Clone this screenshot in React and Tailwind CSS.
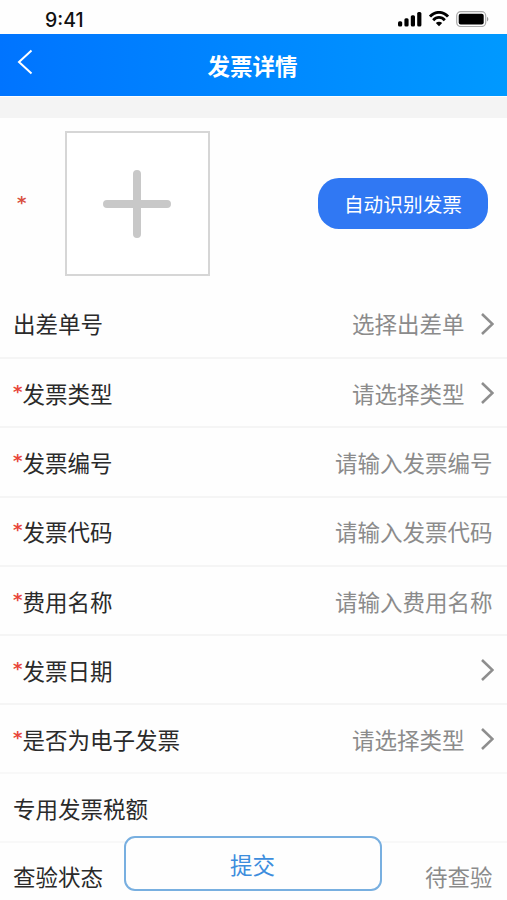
const rows = [
  { label: '出差单号', value: '选择出差单', arrow: true },
  { label: '发票类型', required: true, value: '请选择类型', arrow: true },
  { label: '发票编号', required: true, value: '请输入发票编号' },
  { label: '发票代码', required: true, value: '请输入发票代码' },
  { label: '费用名称', required: true, value: '请输入费用名称' },
  { label: '发票日期', required: true, arrow: true },
  { label: '是否为电子发票', required: true, value: '请选择类型', arrow: true, compact: true },
  { label: '专用发票税额', compact: true },
  { label: '查验状态', value: '待查验', compact: true },
];

function StatusBar() {
  return (
    <div className="flex h-[34px] shrink-0 items-start justify-between pl-[45px] pr-[18.500px]">
      <span className="pt-[9px] font-['Inter','Liberation_Sans',sans-serif] text-[19.500px] leading-[23px] font-medium text-[#111]">
        9:41
      </span>
      <div className="flex items-start pt-[11px]">
        <svg width="24" height="16" viewBox="0 0 24 16" fill="#000">
          <rect x="0" y="10.2" width="4.2" height="5.3" rx="1.5" />
          <rect x="6.4" y="7.3" width="4.2" height="8.2" rx="1.5" />
          <rect x="12.8" y="4.2" width="4.2" height="11.3" rx="1.5" />
          <rect x="19.2" y="1" width="4.2" height="14.5" rx="1.5" />
        </svg>
        <svg className="ml-[7px]" width="20" height="16" viewBox="0 0 20 16" fill="none" stroke="#000" strokeWidth="2.8">
          <path d="M1 5.6C6-.1 14-.1 19 5.6" />
          <path d="M4.2 9.2c3.4-3.8 8.2-3.8 11.6 0" />
          <path d="M10 15.2l-3.2-3.1c1.9-1.7 4.500-1.700 6.400 0z" fill="#000" stroke="none" />
        </svg>
        <svg className="ml-[7px]" width="33" height="16" viewBox="0 0 33 16">
          <rect x=".7" y=".7" width="29" height="14.800" rx="4" fill="none" stroke="#aaa" strokeWidth="1.2" />
          <rect x="2.700" y="2.800" width="25" height="10.600" rx="2" fill="#000" />
          <path d="M31 5.700c1.800.8 1.800 4 0 4.800z" fill="#999" />
        </svg>
      </div>
    </div>
  );
}

function Row({ label, required, value, arrow, compact }) {
  return (
    <div
      className={`flex shrink-0 items-center border-b-2 pl-[13px] pr-[14.500px] text-[22.5px] leading-[30px] ${
        compact ? 'h-[68.700px] border-[#f8f8f8]' : 'h-[69.300px] border-[#f5f5f5]'
      }`}
    >
      {required && (
        <span className="w-[9.500px] pb-[2px] font-['DejaVu_Sans',sans-serif] text-[18px] font-bold text-[#e8463a]">*</span>
      )}
      <span className="text-[#2a2a2a]">{label}</span>
      <span className="ml-auto text-[#8b8b8b]">{value}</span>
      {arrow && (
        <svg className="mt-px mr-[-1px] ml-[16px]" width="13" height="22" viewBox="0 0 13 22" fill="none" stroke="#8e8e8e" strokeWidth="2.600">
          <path d="M1 1l10.500 10L1 21" />
        </svg>
      )}
    </div>
  );
}

export default function App() {
  return (
    <div className="relative flex h-[900px] w-[507px] flex-col overflow-hidden bg-[#fefefe] font-['Noto_Sans_CJK_SC',sans-serif]">
      <StatusBar />
      <header className="grid h-[62px] shrink-0 grid-cols-3 items-center bg-linear-to-r from-[#0074ff] to-[#0099ff]">
        <svg className="mb-[6px] ml-[17px]" width="17" height="26" viewBox="0 0 17 26" fill="none" stroke="#fff" strokeWidth="2">
          <path d="M14.500 1.500L2 13l12.500 11.500" />
        </svg>
        <h1 className="pr-[2px] text-center text-[22.5px] leading-[30px] font-bold text-white">发票详情</h1>
      </header>
      <div className="h-[22px] shrink-0 border-t border-white bg-[#f4f4f4]" />
      <section className="flex h-[171px] shrink-0 items-center pl-[17px] pr-[19px]">
        <span className="w-[48px] pb-px font-['DejaVu_Sans',sans-serif] text-[18px] leading-[30px] font-bold text-[#d9503f]">*</span>
        <div className="flex size-[145px] items-center justify-center border-2 border-[#d6d6d6] bg-white">
          <svg className="mr-px" width="68" height="68" viewBox="0 0 68 68" stroke="#c8c8c8" strokeWidth="8" strokeLinecap="round">
            <path d="M4 34h60M34 4v60" />
          </svg>
        </div>
        <button className="ml-auto h-[51px] w-[170px] rounded-[21px] bg-[#3078f3] text-[19.700px] leading-[28px] text-white">
          自动识别发票
        </button>
      </section>
      <main className="flex flex-col pt-[0.700px]">
        {rows.map((row) => (
          <Row key={row.label} {...row} />
        ))}
      </main>
      <button className="absolute top-[836px] left-[123.500px] h-[55px] w-[258px] rounded-[11px] border-2 border-[#78afe0] bg-[#fefefe] text-[22.5px] leading-[30px] text-[#3c8ddd]">
        提交
      </button>
    </div>
  );
}
